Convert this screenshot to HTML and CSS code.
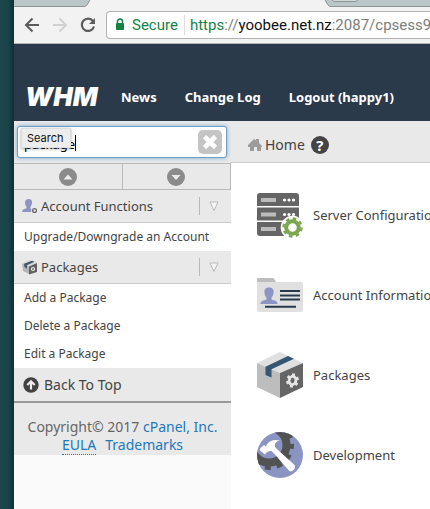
FILE: index.html
```html
<!DOCTYPE html>
<html lang="en">
<head>
<meta charset="utf-8">
<meta name="viewport" content="width=device-width, initial-scale=1">
<title>WHM</title>
<link rel="stylesheet" href="styles.css">
</head>
<body>
<div class="window">
  <div class="tabs">
    <svg class="tab-left" viewBox="0 0 77 7" width="77" height="7"><path d="M0 0H76L73 5Q72 6.500 70 6.500H0Z" fill="#bac6c8"/><path d="M76 0L73 5Q72 6.500 70 6.500H0" fill="none" stroke="#8c9698"/></svg>
    <svg class="tab-right" viewBox="0 0 106 7" width="106" height="7"><path d="M1 0L4 5Q5 6.500 7 6.500H106V0Z" fill="#bac6c8"/><path d="M1 0L4 5Q5 6.500 7 6.500H106" fill="none" stroke="#8c9698"/><path d="M8 0Q9 1.500 11 1.500H31Q33 1.500 34 0" fill="#d2d8d9" stroke="#8c9698"/></svg>
  </div>
  <div class="toolbar">
    <button class="nav-button" aria-label="Back"><svg viewBox="0 0 16 16" width="16" height="16" fill="none" stroke="#5c5c5c" stroke-width="2"><path d="M15 8H2.500M8.500 1.500L2 8l6.500 6.500"/></svg></button>
    <button class="nav-button" aria-label="Forward"><svg viewBox="0 0 16 16" width="16" height="16" fill="none" stroke="#d0d0d0" stroke-width="2"><path d="M1 8H13.500M7.500 1.500L14 8l-6.500 6.500"/></svg></button>
    <button class="nav-button" aria-label="Reload"><svg viewBox="0 0 16 16" width="16" height="16"><path d="M13 4A6.200 6.200 0 1 0 14 9.500" fill="none" stroke="#5c5c5c" stroke-width="2.200"/><path d="M15 1V7H9Z" fill="#5c5c5c"/></svg></button>
    <div class="address">
      <svg viewBox="0 0 10 13" width="10" height="13"><path d="M2.500 6V3.500a2.500 2.500 0 0 1 5 0V6" fill="none" stroke="#138244" stroke-width="1.500"/><rect x="1" y="5" width="8" height="7" rx="1" fill="#138244"/></svg>
      <span class="secure">Secure</span>
      <span class="url"><span class="scheme">https</span>://<span class="host">yoobee.net.nz</span>:2087/cpsess97</span>
    </div>
  </div>
  <header class="header">
    <a class="logo" href="#">WHM</a>
    <nav class="menu">
      <a href="#">News</a>
      <a href="#">Change Log</a>
      <a href="#">Logout (happy1)</a>
    </nav>
  </header>
  <div class="page">
    <aside class="sidebar">
      <div class="search">
        <input class="search-input" type="text" value="package" aria-label="Search">
        <span class="caret"></span>
        <span class="tooltip">Search</span>
        <button class="clear" aria-label="Clear search"><svg viewBox="0 0 24 24" width="24" height="24"><rect width="24" height="24" rx="5" fill="#c4c4c4"/><path d="M6.500 6.500l11 11M17.500 6.500l-11 11" stroke="#fff" stroke-width="4.600"/></svg></button>
      </div>
      <div class="arrows">
        <button aria-label="Collapse all"><svg viewBox="0 0 18 18" width="18" height="18"><circle cx="9" cy="9" r="9" fill="#8b8b8b"/><path d="M4.500 11.500L9 6.500l4.500 5Z" fill="#ececec"/></svg></button>
        <button aria-label="Expand all"><svg viewBox="0 0 18 18" width="18" height="18"><circle cx="9" cy="9" r="9" fill="#8b8b8b"/><path d="M4.500 7L9 12l4.500-5Z" fill="#ececec"/></svg></button>
      </div>
      <div class="group">
        <svg viewBox="0 0 16 16" width="16" height="16"><path d="M6.500 1C9 1 10.400 2.500 10 5 9.800 7 9 8 8.500 8.800V10.500L11 12V14H0C0 11.500 2 11 4.500 10.300V8.800C3.500 7.500 3 6.500 3 4.500 3 2.500 4.500 1 6.500 1Z" fill="#8b95c4"/><circle cx="12.500" cy="12.500" r="3.300" fill="#e9e9e9"/><circle cx="12.500" cy="12.500" r="1.900" fill="none" stroke="#676767" stroke-width="1.300"/></svg>
        <span class="group-name">Account Functions</span>
        <button class="toggle" aria-label="Toggle Account Functions"><svg viewBox="0 0 10 10" width="10" height="10"><path d="M1 1h8L5 9.500Z" fill="#f5f5f5" stroke="#b9b9b9"/></svg></button>
      </div>
      <ul class="items">
        <li><a href="#">Upgrade/Downgrade an Account</a></li>
      </ul>
      <div class="group">
        <svg viewBox="0 0 16 16" width="16" height="16"><path d="M0 4L7 7.500V15L1 12Z" fill="#b5b5b5"/><path d="M0 4L8 1l7 2.500L7 7.500Z" fill="#d9d9d9"/><path d="M7 7.500L15 4V13L7 15.500Z" fill="#626262"/><path d="M2 4.800L10 1.700l2.500 1L5 6.300V9.500L2.500 8Z" fill="#465868"/><circle cx="11" cy="10" r="1.500" fill="none" stroke="#eee" stroke-width="1.200"/></svg>
        <span class="group-name">Packages</span>
        <button class="toggle" aria-label="Toggle Packages"><svg viewBox="0 0 10 10" width="10" height="10"><path d="M1 1h8L5 9.500Z" fill="#f5f5f5" stroke="#b9b9b9"/></svg></button>
      </div>
      <ul class="items">
        <li><a href="#">Add a Package</a></li>
        <li><a href="#">Delete a Package</a></li>
        <li><a href="#">Edit a Package</a></li>
      </ul>
      <a class="back-top" href="#"><svg viewBox="0 0 16 16" width="16" height="16"><circle cx="8" cy="8" r="7.700" fill="#424242"/><path d="M8 12.500V5M4.300 8L8 4.300 11.700 8" fill="none" stroke="#eee" stroke-width="2.200"/></svg>Back To Top</a>
      <footer class="footer">
        <div>Copyright© 2017 <a href="#">cPanel, Inc.</a></div>
        <div><a class="eula" href="#">EULA</a><a href="#">Trademarks</a></div>
      </footer>
    </aside>
    <main class="main">
      <div class="crumbs">
        <svg viewBox="0 0 14 14" width="14" height="14" fill="#9b9b9b"><path d="M0 7L6 1l2 1.500V1h3v4l3 3v1H0Z"/><path d="M2 7h11v6H9V9H6v4H2Z"/></svg>
        <a href="#">Home</a>
        <button class="help" aria-label="Help">?</button>
      </div>
      <div class="tiles">
        <a class="tile" href="#">
          <svg viewBox="0 0 46 46" width="46" height="46"><g fill="#656565"><path d="M3 1H39Q42 1 42 4V14H0V4Q0 1 3 1Z"/><path d="M0 15.500H42V28.500H0Z"/><path d="M0 30H42V44H3Q0 44 0 41Z"/></g><g fill="#bcbcbc"><path d="M4 6h15v4H4ZM4 20.500h15v4H4ZM4 35h15v4H4Z"/></g><g fill="#fff"><circle cx="27.500" cy="8" r="1.600"/><circle cx="32" cy="8" r="1.600"/><circle cx="36.500" cy="8" r="1.600"/><circle cx="27.500" cy="22.500" r="1.600"/><circle cx="32" cy="22.500" r="1.600"/><circle cx="36.500" cy="22.500" r="1.600"/></g><circle cx="35.500" cy="35.500" r="11.800" fill="#fff"/><circle cx="35.500" cy="35.500" r="6.300" fill="none" stroke="#7ba74e" stroke-width="4"/><circle cx="35.500" cy="35.500" r="9" fill="none" stroke="#7ba74e" stroke-width="2.400" stroke-dasharray="3.530 3.530"/></svg>
          <span>Server Configuration</span>
        </a>
        <a class="tile" href="#">
          <svg viewBox="0 0 46 46" width="46" height="46"><path d="M0 8V7Q0 6 1 6H16Q17 6 19 10V14H0Z" fill="#bdbdbd"/><path d="M0 10H44Q46 10 46 12V38Q46 40 44 40H2Q0 40 0 38Z" fill="#e0e0e0"/><path d="M12 15.500C15.500 15.500 17 17.500 16.500 21 16.300 23 15.500 24.500 14.500 25.500V27.500C17 28.500 20.500 28.500 20.500 32H3.500C3.500 28.500 7 28.500 9.500 27.500V25.500C8.500 24.500 7.700 23 7.500 21 7 17.500 8.500 15.500 12 15.500Z" fill="#8b95c4"/><path d="M23 19H43M23 23.500H43M23 27.500H43M8 34.800H39" stroke="#28394b" stroke-width="2"/></svg>
          <span>Account Information</span>
        </a>
        <a class="tile" href="#">
          <svg viewBox="0 0 46 46" width="46" height="46"><path d="M23 0L46 11 23 21 0 11Z" fill="#e0e0e0"/><path d="M0 11L23 21V46L0 35Z" fill="#bdbdbd"/><path d="M46 11L23 21V46L46 35Z" fill="#656565"/><path d="M8.500 14.700L31 4l6 2.700L14.500 17.300V25.500L8.500 23Z" fill="#355773"/><g transform="translate(35.500 28.500) rotate(10)"><ellipse rx="3.400" ry="4.100" fill="none" stroke="#e5e5e5" stroke-width="2.800"/><path d="M0-7V-4M0 4V7M-5.500-3.500L-3-2M5.500 3.500L3 2M5.500-3.500L3-2M-5.500 3.500L-3 2" stroke="#e5e5e5" stroke-width="3"/></g></svg>
          <span>Packages</span>
        </a>
        <a class="tile" href="#">
          <svg viewBox="0 0 46 46" width="46" height="46"><clipPath id="disc"><circle cx="23" cy="23" r="23"/></clipPath><g clip-path="url(#disc)"><path d="M0 0H46V46H0Z" fill="#8b95c4"/><circle cx="12" cy="13" r="17.500" fill="none" stroke="#515252" stroke-width="8"/><circle cx="12" cy="13" r="22.500" fill="none" stroke="#515252" stroke-width="5" stroke-dasharray="5.900 5.880" stroke-dashoffset="2"/></g><path d="M3 16.500L7 13 9 14.500Q12 6 23 8.500 17 9.500 18 15L21 18 37 32.500Q39.500 35 36.500 38T31 37.500L17.500 22 14.500 19Q11.500 18.500 9.500 20.500L8 22.500 3 18.500Z" fill="#fff"/></svg>
          <span>Development</span>
        </a>
      </div>
    </main>
  </div>
</div>
</body>
</html>
```
FILE: styles.css
```css
* { box-sizing: border-box; }
body {
  margin: 0;
  min-height: 100vh;
  padding-left: 14px;
  overflow: hidden;
  background: linear-gradient(to right, #1a464c 0, #1a444a 8px, #102f37 14px);
  color: #444;
  font: 13px/20px "Noto Sans", sans-serif;
}
a { color: inherit; text-decoration: none; }
button { padding: 0; border: 0; background: none; font: inherit; }
svg { display: block; flex: none; }
.window { display: flex; flex-direction: column; min-height: 100vh; background: #fff; }
.tabs { display: flex; justify-content: space-between; height: 7px; background: #f2f2f2; }
.toolbar {
  display: flex;
  align-items: center;
  gap: 12px;
  height: 37px;
  padding: 0 0 1px 10px;
  border-bottom: 1px solid #b5b5b5;
  background: #f2f2f2;
}
.address {
  display: flex;
  flex: 1;
  align-items: center;
  height: 28px;
  margin-left: -2px;
  padding-left: 8px;
  border: 1px solid #b2b2b2;
  border-right: 0;
  border-radius: 4px 0 0 4px;
  background: #fff;
  color: #7c7c7c;
  font: 15px/20px Roboto, sans-serif;
  white-space: nowrap;
  overflow: hidden;
}
.secure { margin: 0 5px 0 7px; padding-right: 6px; border-right: 1px solid #ddd; color: #138244; }
.url { width: 0; flex: 1; }
.scheme { color: #138244; }
.host { color: #111; }
.header { display: flex; align-items: center; height: 77px; padding: 28px 0 0 11px; background: #2a3a4b; color: #fff; }
.logo { width: 96px; font: italic 900 26px/28px Inter, sans-serif; }
.menu { display: flex; gap: 28px; font-weight: 700; white-space: nowrap; }
.page { display: flex; flex: 1; }
.sidebar { flex: none; width: 217px; background: #fafafa; }
.search { position: relative; height: 42px; padding: 5px 4px 0 3px; background: #e9e9e9; }
.search-input {
  width: 100%;
  height: 32px;
  padding: 4px 30px 0 6px;
  border: 1px solid #719fc4;
  border-radius: 3px;
  outline: 0;
  box-shadow: 0 0 4px #78a5d0;
  background: #fff;
  color: #000;
  font: 13px/20px "Noto Sans", sans-serif;
}
.caret { position: absolute; top: 14px; left: 61px; width: 1px; height: 16px; background: #000; }
.tooltip {
  position: absolute;
  top: 7px;
  left: 7px;
  padding: 0 6px 0 5px;
  border: 1px solid #ddd;
  background: #ededed;
  box-shadow: 0 1px 3px #0005;
  color: #111;
  font: 11px/18px Inter, sans-serif;
}
.clear { position: absolute; top: 9px; right: 9px; }
.arrows { display: flex; height: 27px; border: 1px solid #b9b9b9; border-left: 0; background: #e9e9e9; }
.arrows button { display: flex; flex: 1; align-items: center; justify-content: center; }
.arrows button + button { border-left: 1px solid #b9b9b9; }
.group { display: flex; align-items: center; gap: 3px; height: 33px; padding: 0 12px 0 8px; border-bottom: 1px solid #ccc; background: #e9e9e9; }
.group-name { flex: 1; }
.toggle { display: flex; align-items: center; height: 18px; padding-left: 9px; border-left: 1px solid #b9b9b9; }
.items { margin: 0; padding: 0; list-style: none; background: #fff; font-size: 12px; }
.items a { display: block; padding: 4px 10px; white-space: nowrap; }
.back-top { display: flex; align-items: center; gap: 5px; height: 35px; padding-left: 9px; border-bottom: 2px solid #999; background: #e9e9e9; font-size: 14px; }
.footer { height: 52px; padding-top: 15px; background: #e9e9e9; color: #666; font-size: 14px; line-height: 18px; text-align: center; white-space: nowrap; }
.footer a { color: #2079bd; }
.footer .eula { display: inline-block; margin-right: 9px; border-bottom: 1px dotted #2079bd; }
.main { flex: 1; min-width: 0; }
.crumbs { display: flex; align-items: center; gap: 3px; height: 42px; padding: 6px 0 0 17px; border-bottom: 1px solid #ccc; background: #e9e9e9; font-size: 14px; }
.help { width: 18px; height: 18px; margin-left: 3px; border-radius: 50%; background: #444; color: #fff; font: 700 15px/18px "Noto Sans", sans-serif; }
.tiles { display: grid; grid-auto-rows: 80px; padding: 12px 0 0 26px; overflow: hidden; }
.tile { display: flex; align-items: center; gap: 10px; white-space: nowrap; }
```
